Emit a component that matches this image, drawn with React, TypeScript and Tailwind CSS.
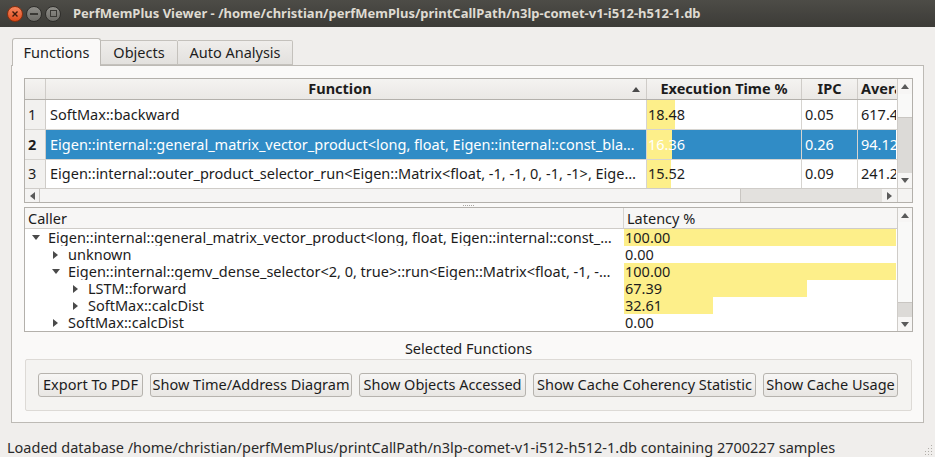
import React from "react";

function Tri({ dir, className = "" }: { dir: "up" | "down" | "left" | "right"; className?: string }) {
  const pts: Record<string, string> = {
    up: "0,5 4,0 8,5",
    down: "0,0 8,0 4,5",
    left: "5,0 5,8 0,4",
    right: "0,0 0,8 5,4",
  };
  const w = dir === "up" || dir === "down" ? 8 : 5;
  const h = dir === "up" || dir === "down" ? 5 : 8;
  return (
    <svg width={w} height={h} viewBox={`0 0 ${w} ${h}`} className={className}>
      <polygon points={pts[dir]} fill="currentColor" />
    </svg>
  );
}

function TitleBar() {
  return (
    <div className="h-[27px] shrink-0 flex items-center bg-gradient-to-b from-[#4d4c47] to-[#3c3b37]">
      <div className="flex items-center gap-[3px] pl-[7px]">
        <div className="w-[16px] h-[16px] rounded-full bg-gradient-to-b from-[#f6855c] to-[#df4a16] border border-[#8c2f0e] flex items-center justify-center">
          <svg width="6" height="6" viewBox="0 0 6 6">
            <path d="M0.5 0.5 L5.5 5.5 M5.5 0.5 L0.5 5.5" stroke="#3c1a0c" strokeWidth="1.4" />
          </svg>
        </div>
        <div className="w-[16px] h-[16px] rounded-full bg-gradient-to-b from-[#8f8e89] to-[#6d6c67] border border-[#2f2e2b] flex items-center justify-center">
          <div className="w-[8px] h-[2px] bg-[#3a3935]" />
        </div>
        <div className="w-[16px] h-[16px] rounded-full bg-gradient-to-b from-[#8f8e89] to-[#6d6c67] border border-[#2f2e2b] flex items-center justify-center">
          <div className="w-[7px] h-[7px] border-[1.5px] border-[#3a3935]" />
        </div>
      </div>
      <div className="ml-[12px] text-[13px] font-bold text-[#dfdbd2] whitespace-nowrap leading-none">
        PerfMemPlus Viewer - /home/christian/perfMemPlus/printCallPath/n3lp-comet-v1-i512-h512-1.db
      </div>
    </div>
  );
}

function Tabs() {
  return (
    <div className="flex items-end h-[27px] pl-[1px]">
      <div className="relative z-10 h-[28px] -mb-px w-[89px] border border-b-0 border-[#bdbab5] rounded-t-[3px] bg-[#faf9f8] flex items-center justify-center text-[14.5px] text-[#1e1e1e]">
        Functions
      </div>
      <div className="h-[25px] w-[77px] border border-l-0 border-[#c4c1bc] rounded-tr-[2px] bg-gradient-to-b from-[#efedeb] to-[#e3e1de] flex items-center justify-center text-[14.5px] text-[#1e1e1e]">
        Objects
      </div>
      <div className="h-[25px] w-[115px] border border-l-0 border-[#c4c1bc] rounded-tr-[2px] bg-gradient-to-b from-[#efedeb] to-[#e3e1de] flex items-center justify-center text-[14.5px] text-[#1e1e1e]">
        Auto Analysis
      </div>
    </div>
  );
}

const topRows = [
  {
    n: "1",
    fn: "SoftMax::backward",
    t: 18.48,
    ipc: "0.05",
    avg: "617.45",
    sel: false,
  },
  {
    n: "2",
    fn: "Eigen::internal::general_matrix_vector_product<long, float, Eigen::internal::const_bla…",
    t: 16.36,
    ipc: "0.26",
    avg: "94.127",
    sel: true,
  },
  {
    n: "3",
    fn: "Eigen::internal::outer_product_selector_run<Eigen::Matrix<float, -1, -1, 0, -1, -1>, Eige…",
    t: 15.52,
    ipc: "0.09",
    avg: "241.28",
    sel: false,
  },
];

function TopTable() {
  return (
    <div className="h-[125px] border border-[#b3b0ab] bg-white flex flex-col shrink-0 text-[14.5px] text-[#1c1c1c]">
      <div className="flex h-[109px]">
        <div className="flex-1 flex flex-col overflow-hidden">
          {/* header */}
          <div className="flex h-[21px] shrink-0 border-b border-[#b3b0ab] bg-gradient-to-b from-[#f4f3f1] to-[#eae8e5] font-bold">
            <div className="w-[21px] shrink-0 border-r border-[#cfccc8]" />
            <div className="w-[601px] shrink-0 border-r border-[#cfccc8] relative flex items-center justify-center">
              <span className="-ml-[12px]">Function</span>
              <Tri dir="up" className="absolute right-[6px] top-[8px] text-[#4a4a4a]" />
            </div>
            <div className="w-[155px] shrink-0 border-r border-[#cfccc8] flex items-center justify-center">
              Execution Time %
            </div>
            <div className="w-[56px] shrink-0 border-r border-[#cfccc8] flex items-center justify-center">IPC</div>
            <div className="w-[38px] shrink-0 overflow-hidden flex items-center pl-[3px] whitespace-nowrap">
              Average Latency
            </div>
          </div>
          {topRows.map((r, i) => (
            <div
              key={r.n}
              className={`flex shrink-0 ${i === 2 ? "h-[28px]" : "h-[30px] border-b border-[#d6d4d0]"}`}
            >
              <div
                className={`w-[21px] shrink-0 border-r border-[#cfccc8] bg-[#f2f1ef] flex items-center pl-[3px] ${
                  r.sel ? "font-bold" : ""
                }`}
              >
                {r.n}
              </div>
              <div
                className={`w-[601px] shrink-0 border-r border-[#d6d4d0] flex items-center pl-[4px] overflow-hidden whitespace-nowrap ${
                  r.sel ? "bg-[#308cc6] text-white" : ""
                }`}
              >
                {r.fn}
              </div>
              <div
                className={`w-[155px] shrink-0 border-r border-[#d6d4d0] relative flex items-center ${
                  r.sel ? "bg-[#308cc6] text-white" : ""
                }`}
              >
                <div className="absolute left-0 top-0 bottom-0 bg-[#fdef8a]" style={{ width: `${(r.t / 100) * 153}px` }} />
                <span className="relative pl-[1px]">{r.t.toFixed(2)}</span>
              </div>
              <div
                className={`w-[56px] shrink-0 border-r border-[#d6d4d0] flex items-center pl-[3px] ${
                  r.sel ? "bg-[#308cc6] text-white" : ""
                }`}
              >
                {r.ipc}
              </div>
              <div
                className={`w-[38px] shrink-0 flex items-center pl-[3px] overflow-hidden whitespace-nowrap ${
                  r.sel ? "bg-[#308cc6] text-white" : ""
                }`}
              >
                {r.avg}
              </div>
            </div>
          ))}
        </div>
        {/* vertical scrollbar */}
        <div className="w-[15px] shrink-0 border-l border-[#cfccc8] flex flex-col bg-[#f7f6f5]">
          <div className="h-[15px] flex items-center justify-center text-[#5a5a5a]">
            <Tri dir="up" />
          </div>
          <div className="h-[24px] bg-[#f9f9f8] border-b border-[#c9c6c2]" />
          <div className="flex-1 bg-[#dcdad7]" />
          <div className="h-[15px] flex items-center justify-center text-[#5a5a5a]">
            <Tri dir="down" />
          </div>
        </div>
      </div>
      {/* horizontal scrollbar */}
      <div className="flex h-[14px] border-t border-[#cfccc8]">
        <div className="flex-1 flex bg-[#f4f3f2]">
          <div className="w-[14px] flex items-center justify-center text-[#5a5a5a]">
            <Tri dir="left" />
          </div>
          <div className="w-[702px] bg-[#f5f4f3] border-l border-r border-[#c9c6c2]" />
          <div className="flex-1 bg-[#e3e1de]" />
          <div className="w-[15px] flex items-center justify-center text-[#5a5a5a]">
            <Tri dir="right" />
          </div>
        </div>
        <div className="w-[15px] bg-[#f4f3f2] border-l border-[#cfccc8]" />
      </div>
    </div>
  );
}

const treeRows = [
  { lvl: 0, open: true, text: "Eigen::internal::general_matrix_vector_product<long, float, Eigen::internal::const_…", v: 100 },
  { lvl: 1, open: false, text: "unknown", v: 0 },
  { lvl: 1, open: true, text: "Eigen::internal::gemv_dense_selector<2, 0, true>::run<Eigen::Matrix<float, -1, -…", v: 100 },
  { lvl: 2, open: false, text: "LSTM::forward", v: 67.39 },
  { lvl: 2, open: false, text: "SoftMax::calcDist", v: 32.61 },
  { lvl: 1, open: false, text: "SoftMax::calcDist", v: 0 },
];

function Tree() {
  return (
    <div className="h-[125px] border border-[#b3b0ab] bg-white flex shrink-0 text-[14.5px] text-[#1c1c1c]">
      <div className="flex-1 flex flex-col overflow-hidden">
        <div className="flex h-[21px] shrink-0 border-b border-[#cfccc8] bg-[#f7f6f5] leading-[20px]">
          <div className="w-[599px] shrink-0 border-r border-[#d6d4d0] flex items-center pl-[3px]">Caller</div>
          <div className="flex-1 flex items-center pl-[3px]">Latency %</div>
        </div>
        {treeRows.map((r, i) => (
          <div key={i} className="flex h-[17px] shrink-0 leading-[17px]">
            <div
              className="w-[599px] shrink-0 flex items-center overflow-hidden whitespace-nowrap"
              style={{ paddingLeft: `${7 + r.lvl * 20}px` }}
            >
              <span className="w-[16px] shrink-0 flex items-center text-[#4a4a4a]">
                {r.open ? <Tri dir="down" /> : <Tri dir="right" className="ml-[1px]" />}
              </span>
              <span>{r.text}</span>
            </div>
            <div className="flex-1 relative flex items-center">
              {r.v > 0 && (
                <div className="absolute left-0 top-0 bottom-0 bg-[#fdef8a]" style={{ width: `${(r.v / 100) * 272}px` }} />
              )}
              <span className="relative pl-[1px]">{r.v.toFixed(2)}</span>
            </div>
          </div>
        ))}
      </div>
      <div className="w-[15px] shrink-0 border-l border-[#cfccc8] flex flex-col bg-[#f7f6f5]">
        <div className="h-[14px] flex items-center justify-center text-[#5a5a5a]">
          <Tri dir="up" />
        </div>
        <div className="h-[81px] bg-[#f9f9f8] border-b border-[#c9c6c2]" />
        <div className="flex-1 bg-[#dcdad7]" />
        <div className="h-[14px] flex items-center justify-center text-[#5a5a5a]">
          <Tri dir="down" />
        </div>
      </div>
    </div>
  );
}

function Btn({ w, children }: { w: string; children: React.ReactNode }) {
  return (
    <div
      className={`${w} h-[24px] shrink-0 rounded-[3px] border border-[#b6b3ae] bg-gradient-to-b from-[#f7f6f5] to-[#e8e6e3] flex items-center justify-center text-[14.5px] text-[#1c1c1c] whitespace-nowrap`}
    >
      {children}
    </div>
  );
}

export default function App() {
  return (
    <div className="w-[935px] h-[457px] overflow-hidden bg-[#f0eeec] flex flex-col font-['Noto_Sans',sans-serif] relative">
      <TitleBar />
      <div className="px-[11px] pt-[11px] flex flex-col">
        <Tabs />
        <div className="h-[358px] w-[913px] border border-[#bdbab5] bg-[#faf9f8] flex flex-col pl-[12px] pr-[10px] pt-[12px]">
          <TopTable />
          <div className="h-[4px] shrink-0 flex items-center justify-center">
            <div className="flex gap-[1px]">
              {[0, 1, 2, 3, 4, 5].map((k) => (
                <div key={k} className="w-[1px] h-[1px] bg-[#a9a6a1]" />
              ))}
            </div>
          </div>
          <Tree />
          <div className="h-[27px] shrink-0 flex items-center justify-center text-[14.5px] text-[#1c1c1c] pt-[7px]">
            Selected Functions
          </div>
          <div className="mx-[1px] h-[52px] shrink-0 rounded-[2px] border border-[#dddad6] bg-[#f4f3f1] flex items-center pl-[12px] gap-[7px]">
            <Btn w="w-[105px]">Export To PDF</Btn>
            <Btn w="w-[202px]">Show Time/Address Diagram</Btn>
            <Btn w="w-[167px]">Show Objects Accessed</Btn>
            <Btn w="w-[223px]">Show Cache Coherency Statistic</Btn>
            <Btn w="w-[135px]">Show Cache Usage</Btn>
          </div>
        </div>
      </div>
      <div className="pl-[7px] pt-[14px] text-[14.5px] leading-[20px] text-[#2a2a2a] whitespace-nowrap">
        Loaded database /home/christian/perfMemPlus/printCallPath/n3lp-comet-v1-i512-h512-1.db containing 2700227 samples
      </div>
      <svg className="absolute right-[2px] bottom-[2px]" width="10" height="10" viewBox="0 0 10 10">
        {[
          [8, 0], [8, 3], [5, 3], [8, 6], [5, 6], [2, 6], [8, 9], [5, 9], [2, 9],
        ].map(([x, y], k) => (
          <rect key={k} x={x} y={y} width="1" height="1" fill="#b0ada8" />
        ))}
      </svg>
    </div>
  );
}
